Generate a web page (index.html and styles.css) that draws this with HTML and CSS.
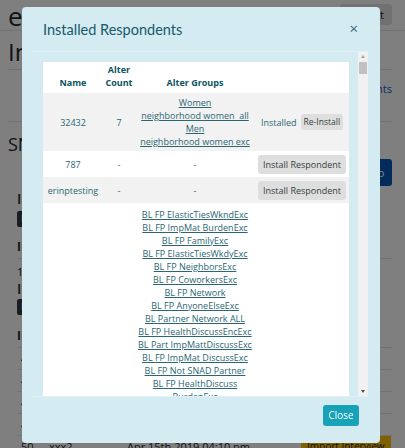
FILE: index.html
```html
<!DOCTYPE html>
<html>
<head>
<meta charset="utf-8">
<link rel="stylesheet" href="styles.css">
</head>
<body>
<div class="page">
  <nav class="navbar">
    <span class="brand">egoweb</span>
    <span class="logout">Logout</span>
  </nav>
  <h1 class="page-title">Interviews</h1>
  <div class="link-row"><span class="blink">Installed Respondents</span></div>
  <div class="study-row">
    <h2 class="study">SNAD Study</h2>
    <span class="pbtn">Go</span>
  </div>
  <div class="sub">Interviews</div>
  <div class="dbtn">Export</div>
  <div class="th-row">ID</div>
  <div class="small">1</div>
  <div class="sub second">Interviews</div>
  <div class="dbtn flush">Export</div>
  <div class="th-row two">ID</div>
  <div class="trow">46</div>
  <div class="trow">47</div>
  <div class="trow">48</div>
  <div class="trow">49</div>
  <div class="trow last"><span class="c1">50</span><span class="c2">xxx2</span><span class="c3">Apr 15th 2019 04:10 pm</span><span class="badge">Import Interview</span></div>
</div>
<div class="overlay"></div>
<div class="modal">
  <div class="modal-header">
    <h5 class="modal-title">Installed Respondents</h5>
    <span class="close">&times;</span>
  </div>
  <div class="modal-body">
    <div class="scroll">
      <table class="tbl">
        <thead>
          <tr><th class="c-name">Name</th><th class="c-count">Alter<br>Count</th><th class="c-groups">Alter Groups</th><th class="c-act"></th></tr>
        </thead>
        <tbody>
          <tr class="odd r1">
            <td>32432</td><td>7</td>
            <td class="groups"><a>Women</a><a>neighborhood women&nbsp; all</a><a>Men</a><a>neighborhood women exc</a></td>
            <td class="act"><span class="installed">Installed</span><span class="btn sm">Re-Install</span></td>
          </tr>
          <tr class="r2">
            <td>787</td><td>-</td><td>-</td>
            <td class="act"><span class="btn">Install Respondent</span></td>
          </tr>
          <tr class="odd r2">
            <td>erinptesting</td><td>-</td><td>-</td>
            <td class="act"><span class="btn">Install Respondent</span></td>
          </tr>
          <tr class="r4">
            <td></td><td></td>
            <td class="groups list"><a>BL FP ElasticTiesWkndExc</a><a>BL FP ImpMat BurdenExc</a><a>BL FP FamilyExc</a><a>BL FP ElasticTiesWkdyExc</a><a>BL FP NeighborsExc</a><a>BL FP CoworkersExc</a><a>BL FP Network</a><a>BL FP AnyoneElseExc</a><a>BL Partner Network ALL</a><a>BL FP HealthDiscussEncExc</a><a>BL Part ImpMattDiscussExc</a><a>BL FP ImpMat DiscussExc</a><a>BL FP Not SNAD Partner</a><a>BL FP HealthDiscuss<br>BurdenExc</a><a>BL FP SpouseExc</a><a>BL FP FriendsExc</a></td>
            <td></td>
          </tr>
        </tbody>
      </table>
    </div>
    <div class="sbar">
      <div class="arrow up"></div>
      <div class="thumb"></div>
      <div class="track"></div>
      <div class="arrow down"></div>
    </div>
  </div>
  <div class="modal-footer">
    <span class="close-btn">Close</span>
  </div>
</div>
</body>
</html>
```
FILE: styles.css
```css
html, body { margin: 0; padding: 0; }
body {
  width: 405px; height: 448px; overflow: hidden;
  font-family: "Open Sans", "Noto Sans", sans-serif;
  color: #212529; background: #fff;
}
.page { padding: 0 13px 0 8px; }
.navbar {
  height: 31px; border-bottom: 1px solid #dee2e6;
  display: flex; align-items: center; justify-content: space-between;
  margin: 0 -13px 0 -8px; padding: 0 13px 0 8px; box-sizing: border-box;
}
.brand { font-size: 26px; line-height: 26px; margin-top: 2px; }
.logout { background: #e2e3e5; border-radius: 3px; padding: 4px 8px; font-size: 11px; height: 13px; line-height: 13px; margin-top: -2px; }
.page-title { font-size: 24px; font-weight: 400; margin: 0; height: 38px; line-height: 42px; border-bottom: 1px solid #dee2e6; }
.link-row { height: 51px; border-bottom: 1px solid #dee2e6; text-align: right; font-size: 11px; line-height: 38px; }
.blink { color: #0062cc; }
.study-row { position: relative; height: 67px; }
.study { font-size: 18px; font-weight: 400; margin: 0; line-height: 44px; }
.pbtn { position: absolute; right: 0; top: 37px; width: 30px; height: 27px; background: #0757b7; border-radius: 3px; color: #fff; font-size: 11px; text-align: center; line-height: 27px; }
.sub { font-size: 14px; margin: 0 0 0 9px; line-height: 20px; font-weight: 600; }
.sub.second { margin-top: 1px; }
.dbtn { margin: 2px 0 0 9px; width: 40px; height: 16px; background: #343a40; border-radius: 2px; color: #fff; font-size: 9px; line-height: 16px; padding: 0 4px; }
.dbtn.flush { margin-top: 0; }
.th-row { margin: 9px 0 0 9px; font-weight: 700; font-size: 12px; line-height: 22px; border-bottom: 1px solid #dee2e6; }
.th-row.two { margin-top: 10px; }
.small { margin: 7px 0 0 9px; font-size: 11px; line-height: 12px; }
.trow { margin: 0 0 0 9px; font-size: 11px; line-height: 21px; border-bottom: 1px solid #dee2e6; padding-left: 4px; }
.trow.last { display: flex; border-bottom: 0; }
.c1 { width: 28px; } .c2 { width: 78px; } .c3 { width: 174px; }
.badge { background: #ffc107; font-size: 10px; padding: 0 6px; }

.overlay { position: fixed; inset: 0; background: rgba(0,0,0,0.5); }

.modal {
  position: fixed; left: 22px; top: 7px; width: 358px; height: 436px;
  background: #d4ebf1; border-radius: 4px;
  display: flex; flex-direction: column; color: #0c5460;
}
.modal-header {
  height: 44px; flex: none; display: flex; align-items: center; justify-content: space-between;
  padding: 0 22px 0 21px; box-sizing: border-box;
}
.modal-title { margin: 0; font-family: Lato, "Open Sans", sans-serif; font-size: 14.5px; font-weight: 400; line-height: 20px; margin-top: 2px; color: #16596a; }
.close { font-size: 15px; line-height: 15px; color: #3d6470; margin-top: -2px; }
.modal-body {
  flex: none; height: 346px; margin: 0 12px 0 11px; display: flex;
  border-top: 1px solid #def1f6; border-bottom: 1px solid #def1f6; box-sizing: border-box;
}
.scroll { flex: 1; overflow: hidden; padding: 10px 9px 0 10px; }
.sbar { width: 10px; background: #f1f1f1; display: flex; flex-direction: column; align-items: center; }
.arrow { width: 10px; height: 9px; flex: none; position: relative; }
.arrow.up::after, .arrow.down::after { content: ""; position: absolute; left: 3px; width: 0; height: 0; border-left: 2px solid transparent; border-right: 2px solid transparent; }
.arrow.up::after { top: 3px; border-bottom: 3px solid #a3a3a3; }
.arrow.down::after { top: 3px; border-top: 3px solid #505050; }
.thumb { width: 8px; height: 12px; background: #c1c1c1; flex: none; margin-top: 1px; }
.track { flex: 1; }

.tbl { width: 306px; border-collapse: collapse; background: #fff; font-size: 9px; table-layout: fixed; }
.tbl th, .tbl td { text-align: center; padding: 0; }
.tbl th { font-weight: 700; vertical-align: bottom; line-height: 13px; padding-bottom: 4px; height: 27px; }
.c-name { width: 60px; } .c-count { width: 32px; } .c-groups { width: 120px; } .c-act { width: 94px; }
.tbl td { vertical-align: middle; line-height: 13px; color: #2b6672; }
.odd { background: #f2f2f2; }
.r1 td { height: 58px; }
.r2 td { height: 26px; }
.r4 td { vertical-align: top; padding-top: 5px; }
.tbl td.groups { padding: 0 2px; }
.tbl .r4 td.groups { padding: 5px 2px 0; }
.groups a { display: block; color: #2b6672; text-decoration: underline; white-space: nowrap; }
.act { white-space: nowrap; }
.installed { margin-right: 4px; vertical-align: middle; }
.btn { display: inline-block; background: #dedede; color: #333f42; border-radius: 3px; padding: 0 5px; height: 19px; line-height: 19px; vertical-align: middle; }
.btn.sm { padding: 0 3px; height: 16px; line-height: 16px; font-size: 8.5px; }

.modal-footer { flex: 1; display: flex; justify-content: flex-end; align-items: flex-start; padding: 8px 21px 0 0; }
.close-btn { background: #17a2b8; color: #fff; border-radius: 3px; font-size: 10px; height: 21px; line-height: 21px; width: 36px; text-align: center; }
```
